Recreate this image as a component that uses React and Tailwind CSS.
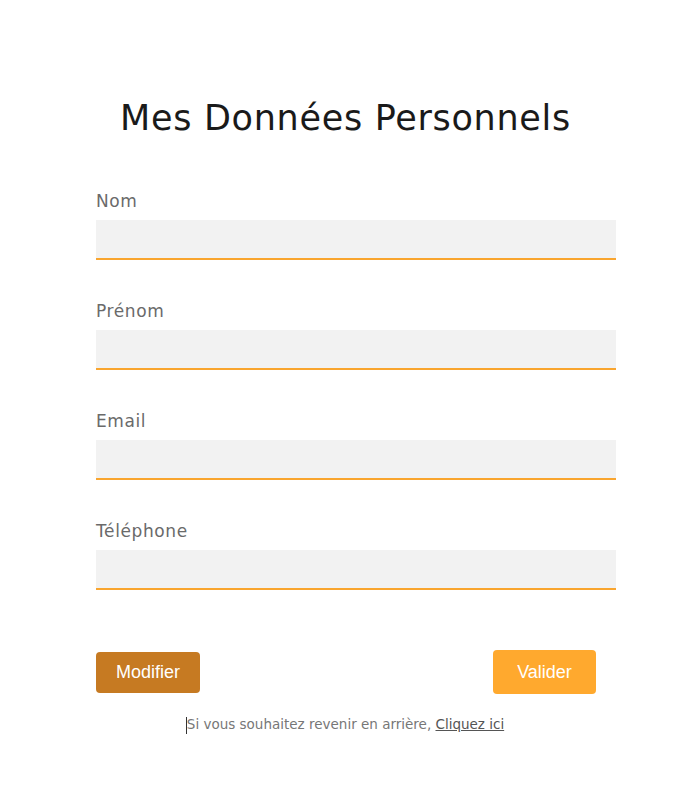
export default function App() {
  const fields = ["Nom", "Prénom", "Email", "Téléphone"];
  return (
    <div className="min-h-[791px] w-full bg-white" style={{ fontFamily: '"DejaVu Sans", sans-serif' }}>
      <div className="pt-[92px] text-center">
        <h1 className="text-[35px] leading-[52px] tracking-[0.7px] text-[#1a1a1a] font-normal">Mes Données Personnels</h1>
      </div>
      <div className="px-[96px] pt-[43px]">
        <div className="flex flex-col gap-[37px]">
          {fields.map((f) => (
            <div key={f} className="flex flex-col">
              <label className="text-[17px] leading-[24px] tracking-[0.6px] font-normal text-[#6a6a6a] h-[33px] pt-[2px]">{f}</label>
              <div className="w-[520px] h-[40px] bg-[#f2f2f2] border-b-2 border-[#f9a52e]"></div>
            </div>
          ))}
        </div>
        <div className="flex items-center justify-between mt-[60px]">
          <button className="w-[104px] h-[41px] rounded-[4px] bg-[#c67a22] text-white text-[18px]" style={{ fontFamily: '"Liberation Sans", Arial, sans-serif' }}>Modifier</button>
          <button className="w-[103px] h-[44px] mr-[-1px] rounded-[4px] bg-[#ffa92e] text-white text-[18px]" style={{ fontFamily: '"Liberation Sans", Arial, sans-serif' }}>Valider</button>
        </div>
        <p className="mt-[20px] text-center text-[13.5px] text-[#777]">
          <span className="relative">
            <span className="absolute left-[-1px] top-[1px] w-[1px] h-[17px] bg-[#333]"></span>
            Si vous souhaitez revenir en arrière,{" "}
          </span>
          <a className="underline text-[#555]">Cliquez ici</a>
        </p>
      </div>
    </div>
  );
}
